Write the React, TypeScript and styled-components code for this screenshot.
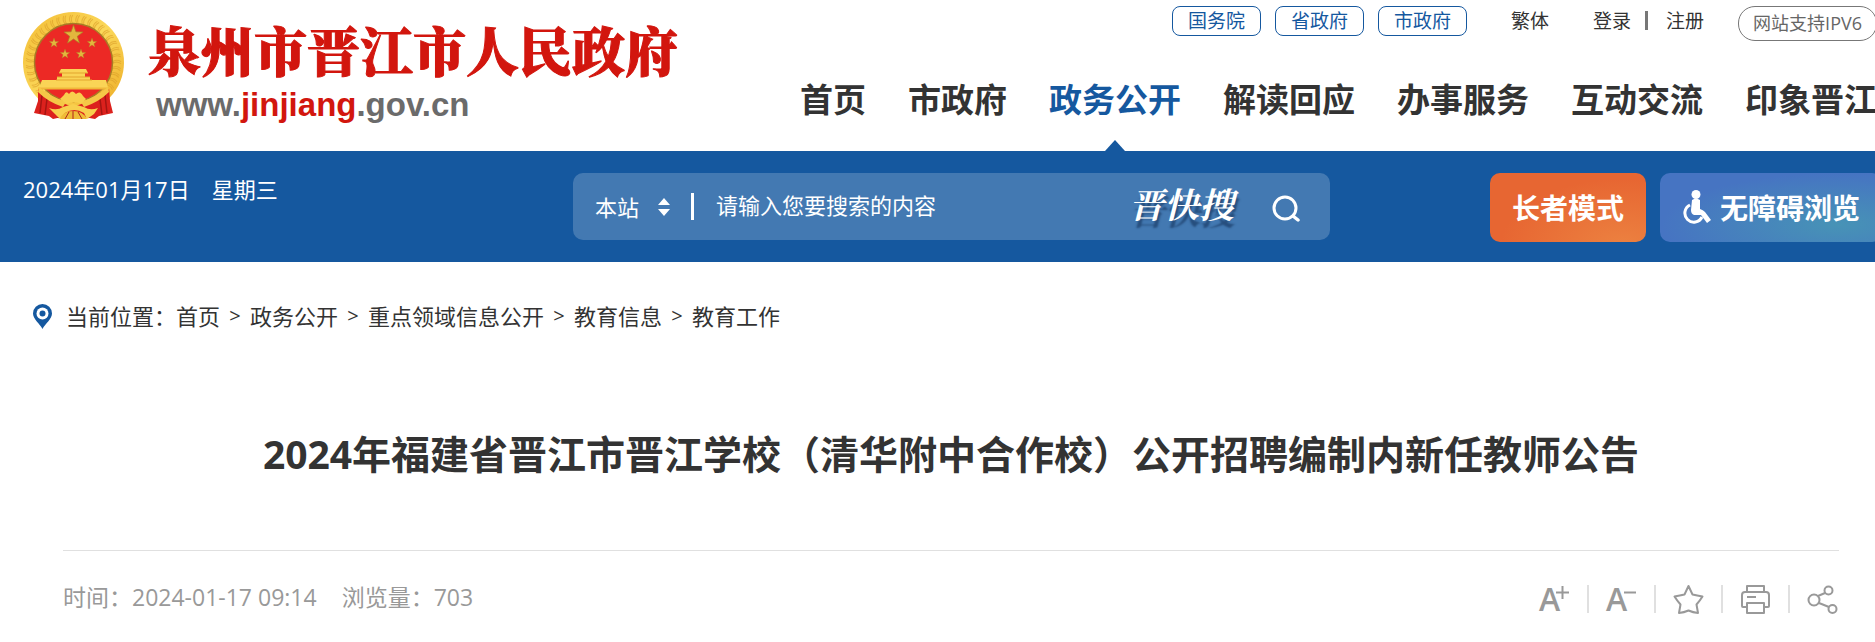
import React from "react";
import styled, { createGlobalStyle, css } from "styled-components";

const sans = `"Open Sans", "Noto Sans CJK SC", sans-serif`;
const serif = `"Noto Serif CJK SC", "Source Han Serif SC", "Noto Sans CJK SC", serif`;
const blue = "#15589f";

const GlobalStyle = createGlobalStyle`
  *, *::before, *::after { box-sizing: border-box; }
  body { margin: 0; background: #fff; color: #333; font-family: ${sans}; overflow-x: hidden; }
  a { color: inherit; text-decoration: none; }
  button, input, select { font: inherit; color: inherit; border: 0; background: none; padding: 0; margin: 0; }
  button { cursor: pointer; }
`;

const Page = styled.div`
  overflow: hidden;
  white-space: nowrap;
`;

const Header = styled.header`
  display: flex;
  align-items: flex-start;
  gap: 122px;
  padding-left: 22px;
`;

const Brand = styled.a`
  display: flex;
  flex: none;
  gap: 23px;
  padding-top: 11px;
`;

const BrandText = styled.span`
  display: flex;
  flex-direction: column;
`;

const BrandName = styled.span`
  color: #d2160e;
  font: 900 53px/76px ${serif};
  -webkit-text-stroke: 1px #d2160e;
`;

const BrandUrl = styled.span`
  margin-top: -1px;
  padding-left: 8px;
  color: #6b6b6b;
  font: bold 33px/38px "Liberation Sans", sans-serif;

  em {
    color: #d2160e;
    font-style: normal;
  }
`;

const HeaderSide = styled.div`
  flex: none;
`;

const TopLinks = styled.div`
  display: flex;
  align-items: flex-start;
  justify-content: flex-end;
  padding-top: 6px;
  height: 41px;
  font-size: 19px;
  line-height: 30px;
`;

const Pill = styled.a`
  margin-right: 14px;
  padding: 0 15px;
  border: 1px solid ${blue};
  border-radius: 8px;
  color: ${blue};
  line-height: 28px;
`;

const TextLink = styled.a<{ $before?: number; $after?: number }>`
  margin-left: ${(p) => p.$before ?? 0}px;
  margin-right: ${(p) => p.$after ?? 0}px;
`;

const LinkRule = styled.span`
  width: 3px;
  height: 19px;
  margin: 5px 18px 0 14px;
  background: #777;
`;

const Badge = styled.a`
  padding: 0 14px;
  border: 1px solid #777;
  border-radius: 17px;
  color: #666;
  font-size: 18px;
  line-height: 33px;
`;

const Nav = styled.nav`
  display: flex;
  gap: 42px;
`;

const NavItem = styled.a<{ $active?: boolean }>`
  position: relative;
  height: 110px;
  padding-top: 35px;
  font-size: 33px;
  line-height: 48px;
  font-weight: 700;
  ${(p) =>
    p.$active &&
    css`
      color: ${blue};
      &::after {
        content: "";
        position: absolute;
        left: 50%;
        bottom: 0;
        border: 10px solid transparent;
        border-top: 0;
        border-bottom: 11px solid ${blue};
        transform: translateX(-50%);
      }
    `}
`;

const Banner = styled.section`
  display: flex;
  align-items: flex-start;
  padding: 22px 0 20px 23px;
  background: ${blue};
  color: #fff;
  font-size: 22px;
`;

const Today = styled.time`
  flex: 0 0 550px;
  line-height: 32px;
`;

const Search = styled.form`
  display: flex;
  flex: 0 0 757px;
  align-items: center;
  height: 67px;
  padding: 0 28px 0 22px;
  border-radius: 10px;
  background: rgba(255, 255, 255, 0.2);
`;

const ScopeBox = styled.label`
  display: flex;
  align-items: center;
  gap: 18px;
  padding-right: 21px;
`;

const Scope = styled.select`
  width: 45px;
  height: 36px;
  appearance: none;
  outline: 0;
`;

const SearchRule = styled.span`
  width: 3px;
  height: 27px;
  background: #fff;
`;

const SearchInput = styled.input`
  flex: 1;
  min-width: 0;
  height: 40px;
  margin-bottom: 4px;
  padding-left: 22px;
  outline: 0;

  &::placeholder {
    color: #fff;
    opacity: 1;
  }
`;

const QuickSearch = styled.a`
  margin: 0 38px 8px 0;
  font: italic 700 35px/48px ${serif};
  text-shadow: 1px 7px 2px rgba(20, 50, 90, 0.6);
`;

const IconButton = styled.button`
  display: flex;
`;

const Modes = styled.div`
  display: flex;
  flex: none;
  gap: 14px;
  margin-left: 160px;
`;

const ModeButton = styled.button<{ $tone: "warm" | "cool" }>`
  display: flex;
  align-items: center;
  gap: 8px;
  height: 69px;
  padding: 0 22px 2px;
  border-radius: 10px;
  font-size: 28px;
  font-weight: 700;
  background: ${(p) =>
    p.$tone === "warm"
      ? "radial-gradient(ellipse at 85% 105%, #ec8140 0%, #e76632 65%)"
      : "radial-gradient(ellipse at 80% 75%, #4793b6 0%, #4674c2 70%)"};
`;

const Crumbs = styled.nav`
  display: flex;
  align-items: center;
  padding: 37px 33px 0;
  font-size: 22px;
  line-height: 34px;

  svg {
    margin-right: 14px;
  }
`;

const CrumbMark = styled.span`
  width: 30px;
  text-align: center;
  font-size: 20px;
`;

const Article = styled.main`
  margin: 0 36px 0 63px;
`;

const Title = styled.h1`
  margin: 0;
  padding: 92px 0 67px;
  border-bottom: 1px solid #e0e0e0;
  font-size: 39px;
  line-height: 58px;
  font-weight: 700;
  text-align: center;
`;

const Meta = styled.div`
  display: flex;
  align-items: flex-start;
  padding-top: 28px;
  color: #999;
  font-size: 23px;
  line-height: 36px;
`;

const MetaItem = styled.span`
  margin-right: 25px;
`;

const Tools = styled.div`
  display: flex;
  align-items: center;
  gap: 17px;
  height: 40px;
  margin: 0 1px 0 auto;
`;

const ToolRule = styled.span`
  width: 2px;
  height: 28px;
  background: #e0e0e0;
`;

const ToolIcon = styled.svg`
  overflow: visible;
  fill: none;
  stroke: #999;
  stroke-width: 2;

  text {
    fill: #999;
    font: 600 32px/36px "Open Sans", sans-serif;
    stroke: none;
  }
`;

const STAR = "M0-10 2.4-3.2 9.5-3 3.8 1.3 5.9 8.1 0 4 -5.9 8.1 -3.8 1.3 -9.5-3 -2.4-3.2Z";

function Emblem() {
  const ears = Array.from({ length: 34 }, (_, i) => 128 + i * 8.4);
  return (
    <svg width="103" height="110" viewBox="0 0 103 110" aria-hidden="true">
      <defs>
        <linearGradient id="gold" x1="0" y1="0" x2="1" y2="1">
          <stop offset="0" stopColor="#f3bd35" />
          <stop offset=".5" stopColor="#fbd85a" />
          <stop offset="1" stopColor="#eca921" />
        </linearGradient>
      </defs>
      <circle cx="51.500" cy="51.500" r="50.500" fill="url(#gold)" />
      <g stroke="#dda02a" strokeWidth="1" opacity=".65">
        {ears.map((a) => (
          <path key={a} d="M89 51q5-4 10-1M91 54q4-2 8 1" transform={`rotate(${a} 51.500 51.500)`} fill="none" />
        ))}
      </g>
      <circle cx="51.500" cy="51.500" r="39" fill="#ec2925" stroke="#a77b25" strokeWidth="1.500" />
      <path d="M16 77 30 88 51 96 73 88 87 77 88 90 91 102 77 105 73 108 62 106H40L31 108 27 105 12 102 16 90Z" fill="#dc211d" />
      <path d="M20 84 18 102M25 88 23 104M83 84 85 102M78 88 80 104M40 99 36 107M63 99 67 107" stroke="#a51512" strokeWidth="1.500" />
      <g fill="#e3b73d" stroke="#a98026" strokeWidth=".7">
        <path d={STAR} transform="translate(51.500 24)" />
        <path d={STAR} transform="translate(32 32) scale(.5)" />
        <path d={STAR} transform="translate(70 32) scale(.5)" />
        <path d={STAR} transform="translate(43 43) scale(.5)" />
        <path d={STAR} transform="translate(59 43) scale(.5)" />
      </g>
      <path d="M39 58H64L66 62H37Z M40 62H63V66H68V69H84L86 77H17L20 69H35V66H40Z" fill="#fad456" />
      <path d="M37 62H66M35 66H68M34 69H70" stroke="#e2a52e" />
      <path d="M16 77.500H87" stroke="#f0b83a" strokeWidth="2" />
      <path d="M17 76Q29 86 44 91L41 96Q26 91 16 81ZM86 76Q74 86 59 91L62 96Q77 91 87 81Z" fill="#f5c847" />
      <path d="M42 84q2-5 5-1 3-5 7 0 4-4 7 2l3 3-5 5q-7-4-14 0l-7-5Z" fill="#f8cf4e" />
      <path d="M27 97q8 3 14-1l10-3 11 3q6 4 14 1l-4 6-7 5-3-6q-10-6-19 0l-5 6-5-5Z" fill="#f8cf4e" />
      <path d="M38 108q3-8 13-8t14 8Z" fill="#efbc38" />
      <path d="M43 108 47 101M51 108V100M60 108 56 101" stroke="#b0221b" />
    </svg>
  );
}

function LetterIcon({ plus }: { plus?: boolean }) {
  return (
    <ToolIcon width="31" height="31" viewBox="0 0 31 31" aria-hidden="true">
      <text x="0" y="27">A</text>
      <path d={plus ? "M17 8.500H30M23.500 2V15" : "M18 8.500H30"} />
    </ToolIcon>
  );
}

const tools = [
  { label: "放大字体", icon: <LetterIcon plus /> },
  { label: "缩小字体", icon: <LetterIcon /> },
  {
    label: "收藏",
    icon: (
      <ToolIcon width="31" height="31" viewBox="0 0 31 31" strokeLinejoin="round" aria-hidden="true">
        <path d="M15.500 2 19.500 10.500Q24 11.500 29.500 12.500 27 16.500 23.500 20.500L25 29Q20 28.500 15.500 26.500 11 28.500 6 29L7.500 20.500Q4 16.500 1.500 12.500 7 11.500 11.500 10.500Z" />
      </ToolIcon>
    ),
  },
  {
    label: "打印",
    icon: (
      <ToolIcon width="31" height="31" viewBox="0 0 31 31" strokeLinejoin="round" aria-hidden="true">
        <path d="M7 8V2H24V8M7 23H3Q2 23 2 22V11Q2 8 5 8H26Q29 8 29 11V22Q29 23 28 23H24M7 19H24V29H7ZM7 13H16" />
      </ToolIcon>
    ),
  },
  {
    label: "分享",
    icon: (
      <ToolIcon width="31" height="31" viewBox="0 0 31 31" aria-hidden="true">
        <circle cx="7" cy="16" r="5.500" />
        <circle cx="21.500" cy="6.500" r="4" />
        <circle cx="25.500" cy="25" r="4" />
        <path d="M11 12 18 9M12 19 22 23" />
      </ToolIcon>
    ),
  },
];

const crumbs = ["首页", "政务公开", "重点领域信息公开", "教育信息", "教育工作"];
const navItems = ["首页", "市政府", "政务公开", "解读回应", "办事服务", "互动交流", "印象晋江"];

export default function App() {
  return (
    <Page>
      <GlobalStyle />
      <Header>
        <Brand href="#">
          <Emblem />
          <BrandText>
            <BrandName>泉州市晋江市人民政府</BrandName>
            <BrandUrl>
              www.<em>jinjiang</em>.gov.cn
            </BrandUrl>
          </BrandText>
        </Brand>
        <HeaderSide>
          <TopLinks>
            <Pill href="#">国务院</Pill>
            <Pill href="#">省政府</Pill>
            <Pill href="#">市政府</Pill>
            <TextLink href="#" $before={30} $after={44}>繁体</TextLink>
            <TextLink href="#">登录</TextLink>
            <LinkRule />
            <TextLink href="#" $after={34}>注册</TextLink>
            <Badge href="#">网站支持IPV6</Badge>
          </TopLinks>
          <Nav>
            {navItems.map((item) => (
              <NavItem href="#" key={item} $active={item === "政务公开"}>
                {item}
              </NavItem>
            ))}
          </Nav>
        </HeaderSide>
      </Header>

      <Banner>
        <Today dateTime="2024-01-17">2024年01月17日　星期三</Today>
        <Search onSubmit={(e) => e.preventDefault()}>
          <ScopeBox>
            <Scope aria-label="搜索范围">
              <option>本站</option>
            </Scope>
            <svg width="12" height="18" viewBox="0 0 12 18" fill="#fff" aria-hidden="true">
              <path d="M6 0 12 7H0ZM6 18 0 11H12Z" />
            </svg>
          </ScopeBox>
          <SearchRule />
          <SearchInput aria-label="搜索内容" placeholder="请输入您要搜索的内容" />
          <QuickSearch href="#">晋快搜</QuickSearch>
          <IconButton aria-label="搜索">
            <svg width="30" height="30" viewBox="0 0 30 30" fill="none" stroke="#fff" strokeWidth="3" strokeLinecap="round" aria-hidden="true">
              <circle cx="13" cy="16" r="11" />
              <path d="M21 24 26 28" strokeWidth="3.500" />
            </svg>
          </IconButton>
        </Search>
        <Modes>
          <ModeButton $tone="warm">长者模式</ModeButton>
          <ModeButton $tone="cool">
            <svg width="30" height="34" viewBox="0 0 30 34" aria-hidden="true">
              <circle cx="14" cy="4.500" r="4.500" fill="#fff" />
              <path d="M10 10Q14 7 18 10V19Q21 20 23 22L29 30 25 33 19 25H12Q9 24 9 20Z" fill="#fff" />
              <path d="M8 15A9 9 0 1 0 20 27" fill="none" stroke="#fff" strokeWidth="3" />
            </svg>
            无障碍浏览
          </ModeButton>
        </Modes>
      </Banner>

      <Crumbs aria-label="当前位置">
        <svg width="19" height="25" viewBox="0 0 19 25" aria-hidden="true">
          <path d="M9.500 25C7 20 0 15 0 9.500A9.500 9.500 0 0 1 19 9.500C19 15 12 20 9.500 25Z" fill={blue} />
          <circle cx="9.500" cy="9.500" r="6" fill="#fff" />
          <circle cx="9.500" cy="9.500" r="3" fill={blue} />
        </svg>
        <span>当前位置：</span>
        {crumbs.map((c, i) => (
          <React.Fragment key={c}>
            {i > 0 && <CrumbMark>&gt;</CrumbMark>}
            <a href="#">{c}</a>
          </React.Fragment>
        ))}
      </Crumbs>

      <Article>
        <Title>2024年福建省晋江市晋江学校（清华附中合作校）公开招聘编制内新任教师公告</Title>
        <Meta>
          <MetaItem>时间：2024-01-17 09:14</MetaItem>
          <MetaItem>浏览量：703</MetaItem>
          <Tools>
            {tools.map((t, i) => (
              <React.Fragment key={t.label}>
                {i > 0 && <ToolRule />}
                <IconButton aria-label={t.label}>{t.icon}</IconButton>
              </React.Fragment>
            ))}
          </Tools>
        </Meta>
      </Article>
    </Page>
  );
}
